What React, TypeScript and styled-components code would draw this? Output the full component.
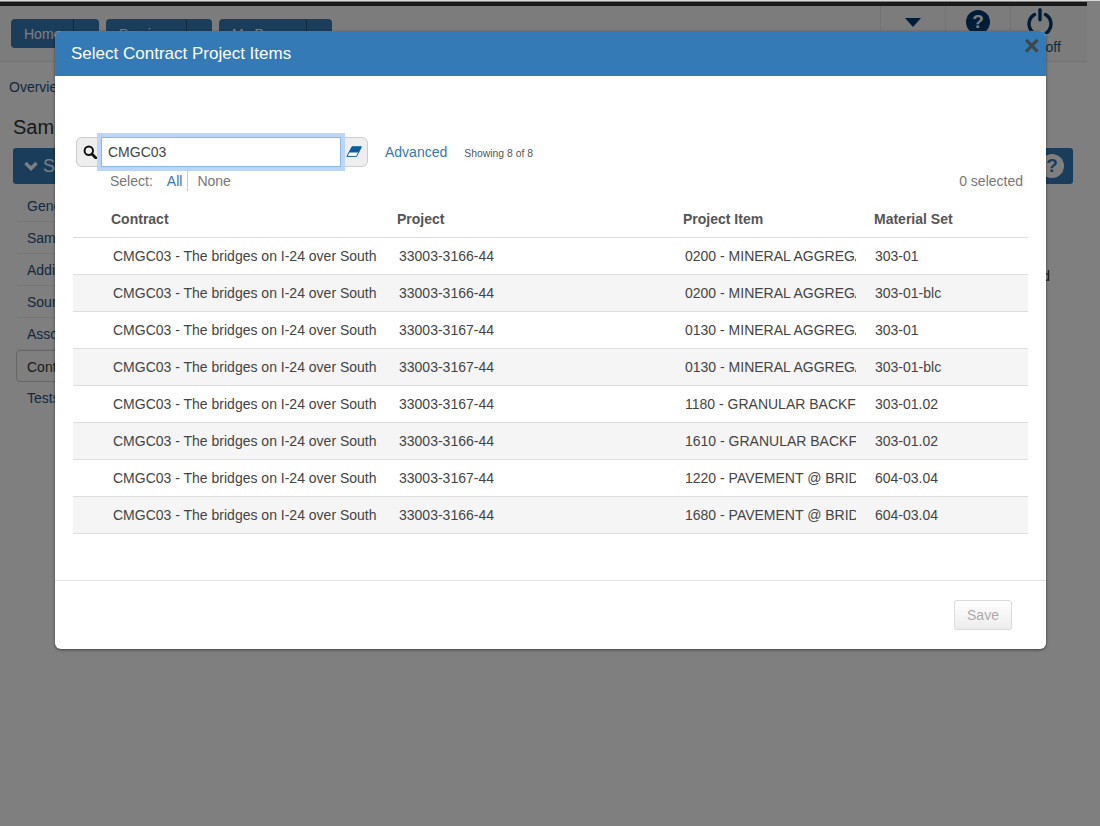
import React from "react";
import styled, { createGlobalStyle } from "styled-components";

const Global = createGlobalStyle`
  html, body { margin: 0; padding: 0; background: #fff; }
  body { font-family: "Liberation Sans", Arial, sans-serif; font-size: 14px; color: #333; }
  * { box-sizing: border-box; }
`;

const Page = styled.div`
  width: 1100px;
  height: 826px;
  overflow: hidden;
  position: relative;
  padding-top: 2px;
`;
const TopEdge = styled.div`
  position: absolute;
  z-index: 2;
  left: 0;
  top: 0;
  width: 100%;
  height: 1px;
  background: #d8d8d8;
`;
const Shell = styled.div`
  width: 1087px;
`;
const TopBar = styled.header`
  height: 60px;
  border-top: 4px solid #333;
  border-bottom: 1px solid #e7e7e7;
  background: #f8f8f8;
  display: flex;
  justify-content: space-between;
`;
const NavButtons = styled.div`
  display: flex;
  gap: 7px;
  padding: 13px 0 0 11px;
`;
const Split = styled.div<{ $w: number }>`
  width: ${(p) => p.$w}px;
  height: 29px;
  display: flex;
  background: #337ab7;
  border-radius: 4px;
  color: #fff;
  font-size: 14px;
  line-height: 31px;
`;
const SplitLabel = styled.span`
  flex: 1;
  padding-left: 13px;
  border-right: 1px solid #23527c;
`;
const SplitArrow = styled.span`
  width: 25px;
`;
const NavIcons = styled.div`
  display: flex;
`;
const IconCell = styled.div<{ $w: number; $pad?: number }>`
  width: ${(p) => p.$w}px;
  padding-right: ${(p) => p.$pad ?? 0}px;
  border-left: 1px solid #e7e7e7;
  display: flex;
  flex-direction: column;
  align-items: center;
  color: #003a70;
`;
const Caret = styled.div`
  margin-top: 12px;
  width: 0;
  height: 0;
  border-left: 8px solid transparent;
  border-right: 8px solid transparent;
  border-top: 9px solid #003a70;
`;
const HelpCircle = styled.div`
  margin-top: 4px;
  width: 24px;
  height: 24px;
  border-radius: 50%;
  background: #003a70;
  color: #f8f8f8;
  font-weight: 700;
  font-size: 19px;
  line-height: 24px;
  text-align: center;
`;
const PowerWrap = styled.div`
  margin-top: 2px;
  height: 26px;
`;
const LogOff = styled.span`
  font-size: 14px;
  line-height: 16px;
  margin-top: 5px;
  color: #23527c;
  white-space: nowrap;
`;
const Content = styled.main`
  padding: 0 14px 0 13px;
`;
const Crumb = styled.a`
  display: block;
  margin: 17px 0 0 -4px;
  color: #23527c;
  line-height: 17px;
`;
const PageTitle = styled.h1`
  margin: 18px 0 0;
  font-size: 20px;
  font-weight: 400;
  line-height: 26px;
  color: #333;
`;
const SectionBar = styled.div`
  margin-top: 8px;
  height: 36px;
  background: #337ab7;
  border-radius: 3px;
  color: #fff;
  font-size: 18px;
  line-height: 36px;
  display: flex;
  align-items: center;
  justify-content: space-between;
  padding: 0 9px 0 11px;
`;
const SectionLeft = styled.span`
  display: flex;
  align-items: center;
  gap: 5px;
`;
const BarHelp = styled.span`
  width: 24px;
  height: 24px;
  border-radius: 50%;
  background: #fff;
  color: #337ab7;
  font-weight: 700;
  font-size: 19px;
  line-height: 24px;
  text-align: center;
`;
const Body = styled.div`
  display: flex;
  justify-content: space-between;
`;
const SideList = styled.nav`
  width: 200px;
  padding-top: 6px;
`;
const SideItem = styled.div<{ $active?: boolean; $last?: boolean }>`
  height: 32px;
  line-height: 32px;
  margin-left: ${(p) => (p.$active ? "3px" : "4px")};
  padding-left: 10px;
  color: ${(p) => (p.$active ? "#333" : "#23527c")};
  border: ${(p) => (p.$active ? "1px solid #ccc" : "none")};
  border-bottom: ${(p) => (p.$last ? "none" : `1px solid ${p.$active ? "#ccc" : "#eee"}`)};
  border-radius: ${(p) => (p.$active ? "4px" : "0")};
`;
const SideNote = styled.div`
  margin: 84px 23px 0 0;
  color: #333;
  font-size: 14px;
  line-height: 17px;
`;

const Backdrop = styled.div`
  position: absolute;
  inset: 0;
  background: rgba(0, 0, 0, 0.5);
`;
const Modal = styled.section`
  position: absolute;
  left: 55px;
  top: 31px;
  width: 991px;
  height: 618px;
  background: #fff;
  border-radius: 6px;
  box-shadow: 0 1px 3px rgba(0, 0, 0, 0.5);
  display: flex;
  flex-direction: column;
`;
const ModalHeader = styled.div`
  height: 45px;
  flex: none;
  background: #337ab7;
  border-radius: 6px 6px 0 0;
  color: #fff;
  font-size: 17px;
  line-height: 45px;
  padding-left: 16px;
  position: relative;
`;
const Close = styled.span`
  position: absolute;
  right: 6px;
  top: 0;
  width: 16px;
  text-align: center;
  font-size: 27px;
  line-height: 30px;
  font-weight: 700;
  color: #444;
`;
const ModalBody = styled.div`
  flex: 1;
  padding: 61px 18px 0;
`;
const SearchRow = styled.div`
  display: flex;
  align-items: center;
  padding-left: 3px;
  height: 30px;
`;
const SearchGroup = styled.div`
  width: 292px;
  height: 30px;
  background: #eee;
  border: 1px solid #ccc;
  border-radius: 6px;
  display: flex;
  align-items: center;
  justify-content: space-between;
  position: relative;
  padding: 0 5px 0 6px;
`;
const SearchInput = styled.div`
  position: absolute;
  left: 24px;
  top: -1px;
  width: 240px;
  height: 30px;
  background: #fff;
  border: 1px solid #8bb8ee;
  outline: 4px solid #bcd5fb;
  font-size: 14px;
  line-height: 28px;
  padding-left: 6px;
  color: #444;
`;
const Advanced = styled.a`
  margin-left: 17px;
  color: #337ab7;
  font-size: 14px;
`;
const Showing = styled.span`
  margin-left: 17px;
  font-size: 10.4px;
  color: #555;
  padding-top: 2px;
`;
const SelectRow = styled.div`
  display: flex;
  align-items: center;
  height: 28px;
  padding: 0 5px 0 37px;
  color: #777;
  font-size: 14px;
`;
const SelectLabel = styled.span`
  margin-right: 14px;
`;
const AllLink = styled.span`
  color: #337ab7;
  padding-right: 5px;
  border-right: 1px solid #ccc;
  line-height: 20px;
  margin-right: 9px;
`;
const Selected = styled.span`
  margin-left: auto;
`;
const TableHead = styled.div`
  display: grid;
  grid-template-columns: 324px 286px 191px 1fr;
  height: 32px;
  margin-top: 11px;
  border-bottom: 1px solid #ddd;
  font-weight: 700;
  font-size: 14px;
  line-height: 26px;
  color: #555;
`;
const HeadCell = styled.div<{ $first?: boolean }>`
  padding-left: ${(p) => (p.$first ? "38px" : "0")};
`;
const Row = styled.div<{ $odd: boolean }>`
  display: grid;
  grid-template-columns: 324px 286px 190px 1fr;
  height: 37px;
  background: ${(p) => (p.$odd ? "#f5f5f5" : "#fff")};
  border-bottom: 1px solid #ddd;
  line-height: 36px;
  font-size: 14px;
  color: #444;
`;
const Cell = styled.div<{ $first?: boolean; $clip?: number }>`
  padding-left: ${(p) => (p.$first ? "40px" : "2px")};
  overflow: hidden;
  white-space: nowrap;
  margin-right: ${(p) => p.$clip ?? 0}px;
`;
const ModalFooter = styled.div`
  height: 69px;
  flex: none;
  border-top: 1px solid #e5e5e5;
  display: flex;
  justify-content: flex-end;
  padding: 19px 34px 0 0;
`;
const SaveButton = styled.button`
  width: 58px;
  height: 30px;
  border: 1px solid #ccc;
  border-radius: 3px;
  background: linear-gradient(#fff, #e6e6e6);
  color: #888;
  opacity: 0.7;
  font: 14px "Liberation Sans", Arial, sans-serif;
  padding: 0;
`;

const SearchIcon = () => (
  <svg width="14" height="14" viewBox="0 0 14 14" fill="none" stroke="#111">
    <circle cx="5.8" cy="5.8" r="4.2" strokeWidth="2" />
    <path d="M8.9 8.9l4 4" strokeWidth="2.8" strokeLinecap="round" />
  </svg>
);
const Eraser = () => (
  <svg width="16" height="12" viewBox="0 0 16 12">
    <path d="M6 .8h9.4L10.600 10.400H.9z" fill="#fff" stroke="#0b5c9e" strokeWidth="1" />
    <path d="M6 .8h9.4L12.600 6.600H3z" fill="#0b5c9e" />
  </svg>
);
const Power = () => (
  <svg width="26" height="26" viewBox="0 0 26 26" fill="none" stroke="#003a70" strokeWidth="3.4" strokeLinecap="round">
    <path d="M7.500 6.500a11 11 0 1 0 11 0" />
    <path d="M13 1.700v10" />
  </svg>
);
const ChevronIcon = () => (
  <svg width="14" height="10" viewBox="0 0 14 10" fill="none" stroke="#fff" strokeWidth="3.4">
    <path d="M1.500 2l5.500 5.500L12.500 2" />
  </svg>
);

const rows = [
  ["33003-3166-44", "0200 - MINERAL AGGREGATE", "303-01"],
  ["33003-3166-44", "0200 - MINERAL AGGREGATE", "303-01-blc"],
  ["33003-3167-44", "0130 - MINERAL AGGREGATE", "303-01"],
  ["33003-3167-44", "0130 - MINERAL AGGREGATE", "303-01-blc"],
  ["33003-3167-44", "1180 - GRANULAR BACKFILL", "303-01.02"],
  ["33003-3166-44", "1610 - GRANULAR BACKFILL", "303-01.02"],
  ["33003-3167-44", "1220 - PAVEMENT @ BRIDGE", "604-03.04"],
  ["33003-3166-44", "1680 - PAVEMENT @ BRIDGE", "604-03.04"],
];

export default function App() {
  return (
    <Page>
      <Global />
      <Shell>
        <TopBar>
          <NavButtons>
            <Split $w={88}><SplitLabel>Home</SplitLabel><SplitArrow /></Split>
            <Split $w={106}><SplitLabel>Preview</SplitLabel><SplitArrow /></Split>
            <Split $w={113}><SplitLabel>My Page</SplitLabel><SplitArrow /></Split>
          </NavButtons>
          <NavIcons>
            <IconCell $w={65}><Caret /></IconCell>
            <IconCell $w={65}><HelpCircle>?</HelpCircle></IconCell>
            <IconCell $w={77} $pad={19}><PowerWrap><Power /></PowerWrap><LogOff>Log off</LogOff></IconCell>
          </NavIcons>
        </TopBar>
        <Content>
          <Crumb>Overview</Crumb>
          <PageTitle>Sample</PageTitle>
          <SectionBar>
            <SectionLeft><ChevronIcon />Sample</SectionLeft>
            <BarHelp>?</BarHelp>
          </SectionBar>
          <Body>
            <SideList>
              <SideItem>General</SideItem>
              <SideItem>Samples</SideItem>
              <SideItem>Additional</SideItem>
              <SideItem>Sources</SideItem>
              <SideItem>Associated</SideItem>
              <SideItem $active>Contract</SideItem>
              <SideItem $last>Tests</SideItem>
            </SideList>
            <SideNote>Required</SideNote>
          </Body>
        </Content>
      </Shell>
      <Backdrop />
      <TopEdge />
      <Modal>
        <ModalHeader>
          Select Contract Project Items
          <Close>×</Close>
        </ModalHeader>
        <ModalBody>
          <SearchRow>
            <SearchGroup>
              <SearchIcon />
              <SearchInput>CMGC03</SearchInput>
              <Eraser />
            </SearchGroup>
            <Advanced>Advanced</Advanced>
            <Showing>Showing 8 of 8</Showing>
          </SearchRow>
          <SelectRow>
            <SelectLabel>Select:</SelectLabel>
            <AllLink>All</AllLink>
            None
            <Selected>0 selected</Selected>
          </SelectRow>
          <TableHead>
            <HeadCell $first>Contract</HeadCell>
            <HeadCell>Project</HeadCell>
            <HeadCell>Project Item</HeadCell>
            <HeadCell>Material Set</HeadCell>
          </TableHead>
          {rows.map((r, i) => (
            <Row key={i} $odd={i % 2 === 1}>
              <Cell $first $clip={20}>CMGC03 - The bridges on I-24 over South Fork</Cell>
              <Cell $clip={20}>{r[0]}</Cell>
              <Cell $clip={17}>{r[1]}</Cell>
              <Cell>{r[2]}</Cell>
            </Row>
          ))}
        </ModalBody>
        <ModalFooter>
          <SaveButton disabled>Save</SaveButton>
        </ModalFooter>
      </Modal>
    </Page>
  );
}
